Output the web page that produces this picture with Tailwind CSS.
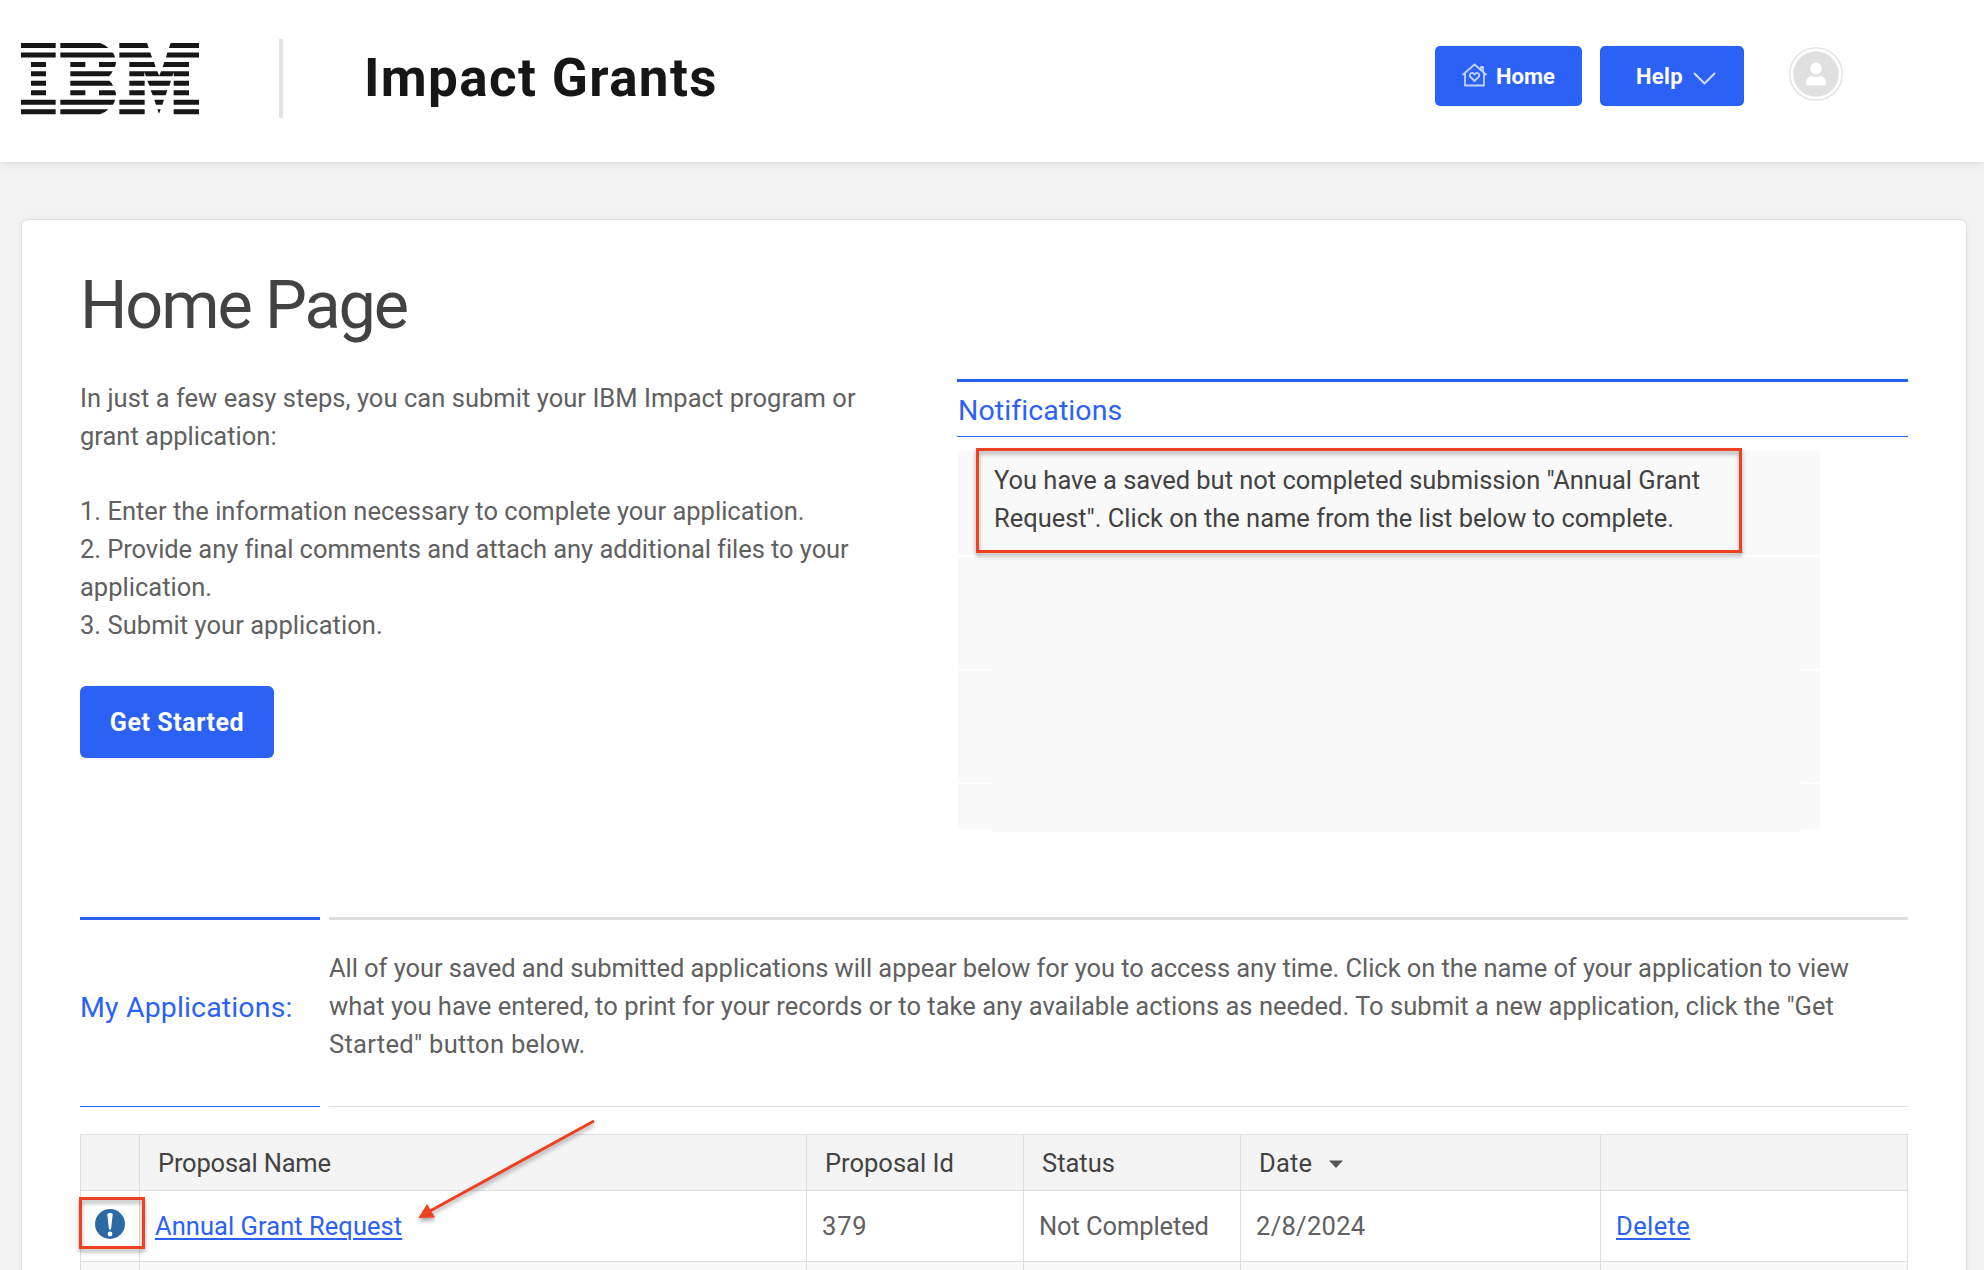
<!DOCTYPE html>
<html lang="en">
<head>
<meta charset="utf-8">
<title>Impact Grants</title>
<script src="https://cdn.jsdelivr.net/npm/@tailwindcss/browser@4"></script>
</head>
<body class="h-[1270px] overflow-hidden bg-[#f3f3f3] font-['Roboto',sans-serif] text-[25.5px] leading-[37.75px] text-[#606060]">

<header class="flex h-[162px] items-start bg-white pl-[21px] shadow-[0_0_9px_rgba(0,0,0,0.14)]">
  <svg class="mt-[42px] h-[73px] w-[179px] shrink-0" viewBox="63 66 537 219" fill="#161616" role="img" aria-label="IBM">
    <!-- I -->
    <path d="M63 69h104v15H63zM63 97.500h104v15H63zM93 126h45v15H93zM93 154h45v15H93zM93 182.500h45v15H93zM93 211h45v15H93zM63 239.500h104v15H63zM63 267.500h104v15H63z"/>
    <!-- B -->
    <path d="M181 69h119q15 4 25 15H181zM181 97.500h157q6 7 7 15H181zM211 126h45v15h-45zM297 126h51q0 9-4 15h-47zM211 154h127q-4 9-11 15H211zM211 182.500h117q8 6 11 15H211zM211 211h45v15h-45zM297 211h47q4 6 4 15h-51zM181 239.500h164q-1 8-6 15H181zM181 267.500h144q-10 11-25 15H181z"/>
    <!-- M -->
    <path d="M358 69h83l5 15h-88zM512 69h85v15h-90zM358 97.500h93l5 15h-98zM502 97.500h95v15h-99zM388 126h74l5 15h-79zM493 126h74v15h-79zM388 154h84l5.500 13 5.500-13h84v15h-46v-12l-4 12h-79l-5-12v12h-45zM388 182.500h46v15h-46zM442 182.500h71l-5 15h-60zM521 182.500h46v15H521zM388 211h46v15h-46zM452 211h50l-5 15h-39zM521 211h46v15h-46zM358 239.500h76v15h-76zM463 239.500h29l-5 15h-19zM521 239.500h76v15h-76zM358 267.500h76v15h-76zM472 267.500h10l-5 14zM521 267.500h76v15h-76z"/>
  </svg>
  <div class="mt-[39px] ml-[79px] h-[79px] w-1 shrink-0 bg-[#e3e3e3]"></div>
  <div class="mt-[48px] ml-[81px] text-[53px] leading-[60px] font-bold tracking-[1.35px] whitespace-nowrap text-[#161616]">Impact Grants</div>
  <nav class="mt-[46px] ml-auto flex gap-[18px] text-[22px] leading-[60px] font-bold text-white">
    <a class="flex h-[60px] w-[147px] items-center rounded-[5px] bg-[#2c61f6] pl-[27px]">
      <svg class="mr-[9px] -mt-[3px] h-[24px] w-[25px] shrink-0" viewBox="0 0 25 24" fill="none" stroke="#c3d1fd" stroke-width="1.800" stroke-linecap="round" stroke-linejoin="round">
        <path d="M1 11.500 12.500 1.500 24 11.500M3 10v12.500h19V10M19 6.500V4h2v4.500"/>
        <path d="M12.500 18 8 13.500c-1.500-3 2.500-5 4.500-2 2-3 6-1 4.500 2z"/>
      </svg>
      <span class="pt-[2px]">Home</span>
    </a>
    <a class="flex h-[60px] w-[144px] items-center rounded-[5px] bg-[#2c61f6] pl-[36px]">
      <span class="pt-[2px] tracking-[0.3px]">Help</span>
      <svg class="mt-[5px] ml-[10px] h-[13px] w-[23px] shrink-0" viewBox="0 0 23 13" fill="none" stroke="#d3defe" stroke-width="2" stroke-linecap="round" stroke-linejoin="round"><path d="M1.500 1.500 11.500 11.500 21.500 1.500"/></svg>
    </a>
  </nav>
  <svg class="mt-[47px] mr-[141px] ml-[45px] h-[54px] w-[54px] shrink-0" viewBox="0 0 54 54">
    <circle cx="27" cy="27" r="26.200" fill="#fff" stroke="#e0e0e0" stroke-width="1.300"/>
    <circle cx="27" cy="27" r="22.800" fill="#e0e0e0"/>
    <circle cx="27" cy="21.500" r="5.800" fill="#fff"/>
    <path d="M17 36.500c0-5 2.500-7.500 5.500-7.500 3 1.300 6 1.300 9 0 3 0 5.500 2.500 5.500 7.500 0 1.200-.6 1.800-1.700 1.800H18.700c-1.100 0-1.700-.6-1.700-1.800z" fill="#fff"/>
  </svg>
</header>

<main class="mt-[57px] ml-[21px] h-[1100px] w-[1946px] rounded-[7px] border border-[#e0e0e0] bg-white pt-[45px] pr-[58px] pl-[58px] shadow-[0_0_6px_rgba(0,0,0,0.05)]">
  <h1 class="text-[66.5px] leading-[80px] tracking-[-2.1px] text-[#424242]">Home Page</h1>

  <div class="mt-[34px] flex h-[538px] justify-between">
    <section class="pt-px whitespace-nowrap">
      <p><span class="tracking-[0.04px]">In just a few easy steps, you can submit your IBM Impact program or</span><br>grant application:</p>
      <p class="mt-[37.75px]"><span class="tracking-[0.01px]">1. Enter the information necessary to complete your application.</span><br><span class="tracking-[-0.06px]">2. Provide any final comments and attach any additional files to your</span><br>application.<br><span class="tracking-[0.04px]">3. Submit your application.</span></p>
      <a class="mt-[42px] flex h-[72px] w-[194px] items-center justify-center rounded-[6px] bg-[#2c61f6] pt-[2px] text-[25px] font-bold tracking-[0.55px] text-white">Get Started</a>
    </section>

    <section class="w-[951px]">
      <h2 class="h-[58px] border-t-3 border-b border-[#2c61f6] pl-px text-[28.5px] leading-[57px] text-[#2c61f6]"><span class="tracking-[0.1px]">Notifications</span></h2>
      <div class="relative mt-[14px] ml-px w-[862px] text-[#424242]">
        <div class="h-[104px] bg-[#f9f9f9] pt-[11px] pl-[36px] whitespace-nowrap"><span class="tracking-[-0.02px]">You have a saved but not completed submission "Annual Grant</span><br><span class="tracking-[-0.03px]">Request". Click on the name from the list below to complete.</span></div>
        <div class="mt-[2px] grid h-[275px] grid-cols-[34px_1fr_19px]">
          <div class="flex flex-col gap-[2px]">
            <div class="h-[112px] bg-[#f9f9f9]"></div>
            <div class="h-[111px] bg-[#f9f9f9]"></div>
            <div class="h-[45px] bg-[#f9f9f9]"></div>
          </div>
          <div class="bg-[#f9f9f9]"></div>
          <div class="flex flex-col gap-[2px]">
            <div class="h-[112px] bg-[#f9f9f9]"></div>
            <div class="h-[111px] bg-[#f9f9f9]"></div>
            <div class="h-[45px] bg-[#f9f9f9]"></div>
          </div>
        </div>
        <!-- callout frame over the first notification -->
        <div class="absolute -top-[3px] left-[18px] h-[105px] w-[766px] border-3 border-[#ee4023] drop-shadow-[0_3px_2px_rgba(0,0,0,0.35)]"></div>
      </div>
    </section>
  </div>

  <section class="flex h-[190px] gap-[9px]">
    <h2 class="flex w-[240px] items-center border-t-3 border-b border-[#2c61f6] pb-[10px] text-[28.5px] tracking-[0.15px] whitespace-nowrap text-[#2c61f6]">My Applications:</h2>
    <p class="flex-1 border-t-3 border-b border-[#dedede] pt-[30px] whitespace-nowrap"><span class="tracking-[-0.06px]">All of your saved and submitted applications will appear below for you to access any time. Click on the name of your application to view</span><br><span class="tracking-[0.03px]">what you have entered, to print for your records or to take any available actions as needed. To submit a new application, click the "Get</span><br><span class="tracking-[0.3px]">Started" button below.</span></p>
  </section>

  <div class="relative mt-[27px] w-[1828px]">
    <table class="w-[1828px] table-fixed border-collapse text-left">
      <colgroup><col class="w-[59px]"><col class="w-[667px]"><col class="w-[217px]"><col class="w-[217px]"><col class="w-[360px]"><col></colgroup>
      <tr class="h-[56px] bg-[#f4f4f4] text-[#424242] *:border *:border-[#dedede] *:p-0 *:pt-[2px] *:font-normal">
        <th></th>
        <th><span class="pl-[18px] tracking-[-0.2px]">Proposal Name</span></th>
        <th><span class="pl-[18px]">Proposal Id</span></th>
        <th><span class="pl-[18px]">Status</span></th>
        <th><div class="flex items-center pl-[18px] tracking-[0.2px]">Date<svg class="ml-[17px] h-[8px] w-[14px]" viewBox="0 0 14 8" fill="#555"><path d="M0 .5h14L7 8z"/></svg></div></th>
        <th></th>
      </tr>
      <tr class="h-[71px] *:border *:border-[#dedede] *:p-0 *:pt-[2px]">
        <td><svg class="ml-[14px] -mt-[6px] h-[30px] w-[30px]" viewBox="0 0 30 30"><circle cx="15" cy="15" r="15" fill="#2b6aa3"/><path d="M12.300 5.500c0-2 5.400-2 5.400 0L16 20.500h-2z" fill="#fff"/><circle cx="15" cy="25" r="2.400" fill="#fff"/></svg></td>
        <td><a class="ml-[15px] tracking-[0.05px] text-[#2c61f6] underline decoration-2 underline-offset-[3px]">Annual Grant Request</a></td>
        <td><span class="pl-[15px] tracking-[0.8px]">379</span></td>
        <td><span class="pl-[15px] tracking-[-0.1px]">Not Completed</span></td>
        <td><span class="pl-[15px] tracking-[0.3px]">2/8/2024</span></td>
        <td><a class="ml-[15px] tracking-[0.4px] text-[#2c61f6] underline decoration-2 underline-offset-[3px]">Delete</a></td>
      </tr>
      <tr class="h-[71px] bg-[#f9f9f9] *:border *:border-[#dedede]"><td></td><td></td><td></td><td></td><td></td><td></td></tr>
    </table>
    <!-- callout frame round the status icon, and the arrow to the proposal link -->
    <div class="absolute top-[63px] -left-px h-[52px] w-[66px] border-3 border-[#ee4023] drop-shadow-[0_3px_2px_rgba(0,0,0,0.35)]"></div>
    <svg class="absolute -top-[17px] left-[330px] h-[110px] w-[195px] drop-shadow-[0_3px_2px_rgba(0,0,0,0.35)]" viewBox="0 0 195 110"><path d="M184 4 20 94" stroke="#ee4023" stroke-width="3"/><path d="M8.500 101 17 87 25 100.500z" fill="#ee4023"/></svg>
  </div>
</main>
</body>
</html>
